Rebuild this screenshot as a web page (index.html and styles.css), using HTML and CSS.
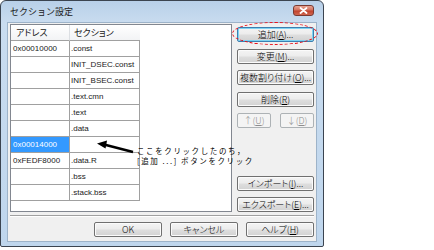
FILE: index.html
```html
<!DOCTYPE html>
<html lang="ja">
<head>
<meta charset="utf-8">
<link rel="stylesheet" href="styles.css">
</head>
<body>
<div class="dialog">
  <div class="titlebar">
    <span class="title">セクション設定</span>
    <span class="close"><svg width="9" height="7" viewBox="0 0 9 7"><path d="M1.5 1 L7.5 6 M7.5 1 L1.5 6" stroke="#fff" stroke-width="1.8" stroke-linecap="round"/></svg></span>
  </div>
  <div class="client">
    <div class="main">
      <div class="listbox">
        <div class="grid">
          <div class="hd">アドレス</div><div class="hd">セクション</div>
          <div class="c a">0x00010000</div><div class="c s">.const</div>
          <div class="c a"></div><div class="c s">INIT_DSEC.const</div>
          <div class="c a"></div><div class="c s">INIT_BSEC.const</div>
          <div class="c a"></div><div class="c s">.text.cmn</div>
          <div class="c a"></div><div class="c s">.text</div>
          <div class="c a"></div><div class="c s">.data</div>
          <div class="c a sel">0x00014000</div><div class="c s"></div>
          <div class="c a">0xFEDF8000</div><div class="c s">.data.R</div>
          <div class="c a"></div><div class="c s">.bss</div>
          <div class="c a"></div><div class="c s">.stack.bss</div>
        </div>
      </div>
      <div class="side">
        <div class="group top">
          <div class="btn def">追加(<u>A</u>)...</div>
          <div class="btn">変更(<u>M</u>)...</div>
          <div class="btn">複数割り付け(<u>O</u>)...</div>
          <div class="btn">削除(<u>R</u>)</div>
          <div class="pair">
            <div class="btn dis">↑(<u>U</u>)</div>
            <div class="btn dis">↓(<u>D</u>)</div>
          </div>
        </div>
        <div class="group bottom">
          <div class="btn">インポート(<u>I</u>)...</div>
          <div class="btn">エクスポート(<u>E</u>)...</div>
        </div>
      </div>
    </div>
    <div class="sep"></div>
    <div class="footer">
      <div class="btn fb">OK</div>
      <div class="btn fb">キャンセル</div>
      <div class="btn fb">ヘルプ(<u>H</u>)</div>
    </div>
  </div>
</div>
<div class="ring"></div>
<svg class="arrow" width="42" height="16" viewBox="0 0 42 16"><path d="M9 5.5 L38 13" stroke="#000" stroke-width="2.6"/><polygon points="2,4.5 12,1.5 10.5,9.5" fill="#000"/></svg>
<div class="note">
  <div>ここをクリックしたのち，</div>
  <div>[追加 ...] ボタンをクリック</div>
</div>
</body>
</html>
```
FILE: styles.css
```css
html, body {
  margin: 0;
  padding: 0;
  background: #fff;
}
body {
  position: relative;
  width: 434px;
  height: 250px;
  overflow: hidden;
  font-family: "Noto Sans CJK JP", "Liberation Sans", sans-serif;
  font-feature-settings: "palt";
}
.dialog {
  box-sizing: border-box;
  width: 324px;
  height: 247px;
  border: 1px solid #3b4450;
  border-radius: 6px 6px 2px 2px;
  background: linear-gradient(to bottom, #b8d0e9 0px, #c9dcef 22px, #bfd6ed 100%);
  padding: 0 6px 4px 6px;
  display: flex;
  flex-direction: column;
}
.titlebar {
  height: 21px;
  display: flex;
  align-items: center;
  padding: 0 3px 0 3px;
}
.title {
  font-size: 9px;
  line-height: 12px;
  letter-spacing: 0;
  font-feature-settings: normal;
  color: #1a1a1a;
  margin-top: 1px;
}
.close {
  margin-left: auto;
  width: 21px;
  height: 11px;
  box-sizing: border-box;
  border: 1px solid #7a3a32;
  border-radius: 3px;
  background: linear-gradient(to bottom, #e8a493 0%, #d2715e 45%, #c0432e 55%, #d0664f 100%);
  display: flex;
  align-items: center;
  justify-content: center;
  margin-top: -3px;
}
.client {
  box-sizing: border-box;
  height: 220px;
  border: 1px solid #9db3c9;
  background: #f0f0f0;
  padding: 1px 2px 4px 2px;
  display: flex;
  flex-direction: column;
}
.main {
  height: 188px;
  display: flex;
  gap: 5px;
}
.listbox {
  box-sizing: border-box;
  width: 222px;
  height: 188px;
  border: 1px solid #828790;
  background: #fff;
}
.grid {
  display: grid;
  grid-template-columns: 59px 70px;
  grid-auto-rows: 16px;
  width: 129px;
}
.hd {
  box-sizing: border-box;
  font-size: 9px;
  line-height: 15px;
  border-right: 1px solid #dcdfe3;
  border-bottom: 1px solid #a0a0a0;
  background: linear-gradient(to bottom, #ffffff, #f2f3f5);
  padding-left: 5px;
  color: #1a1a1a;
}
.hd + .hd {
  padding-left: 4px;
  border-right: none;
}
.c {
  box-sizing: border-box;
  border-right: 1px solid #a0a0a0;
  border-bottom: 1px solid #a0a0a0;
  font-family: "Liberation Sans", sans-serif;
  font-size: 8px;
  line-height: 15px;
  color: #1a1a1a;
  white-space: nowrap;
  overflow: hidden;
}
.a {
  padding-left: 2px;
}
.s {
  padding-left: 1px;
}
.sel {
  background: #3399ff;
  color: #fff;
}
.side {
  width: 77px;
  padding-top: 3px;
  display: flex;
  flex-direction: column;
  justify-content: space-between;
}
.group {
  display: flex;
  flex-direction: column;
}
.group.top {
  gap: 6.5px;
}
.group.bottom {
  gap: 6px;
}
.pair {
  display: flex;
  justify-content: space-between;
}
.pair .btn {
  width: 34px;
}
.btn {
  box-sizing: border-box;
  height: 15px;
  border: 1px solid #707070;
  border-radius: 2px;
  background: linear-gradient(to bottom, #f4f4f4 0%, #ececec 48%, #dedede 52%, #d2d2d2 100%);
  box-shadow: inset 0 0 0 1px #fbfbfb;
  font-size: 9px;
  font-weight: 300;
  line-height: 13px;
  color: #000;
  display: flex;
  align-items: center;
  justify-content: center;
  white-space: nowrap;
}
.btn u {
  text-decoration: underline;
  text-underline-offset: 1px;
}
.btn.def {
  border-color: #3c7fb1;
  box-shadow: inset 0 0 0 1px #7fd3f2;
}
.btn.dis {
  border-color: #adb2b5;
  background: #f4f4f4;
  box-shadow: none;
  color: #8d8d8d;
}
.sep {
  margin-top: 3px;
  border-top: 1px solid #a0a0a0;
  border-bottom: 1px solid #ffffff;
  height: 0;
}
.footer {
  margin-top: 5px;
  display: flex;
  justify-content: flex-end;
  gap: 8px;
}
.btn.fb {
  width: 68px;
}
.ring {
  position: absolute;
  left: 232px;
  top: 22px;
  width: 86px;
  height: 23px;
  box-sizing: border-box;
  border: 1px dashed #e8101a;
  border-radius: 50%;
}
.arrow {
  position: absolute;
  left: 95px;
  top: 139px;
}
.note {
  position: absolute;
  left: 137px;
  top: 146px;
  font-size: 7.5px;
  line-height: 10px;
  letter-spacing: 1.6px;
  font-feature-settings: normal;
  color: #000;
  white-space: nowrap;
}
```
